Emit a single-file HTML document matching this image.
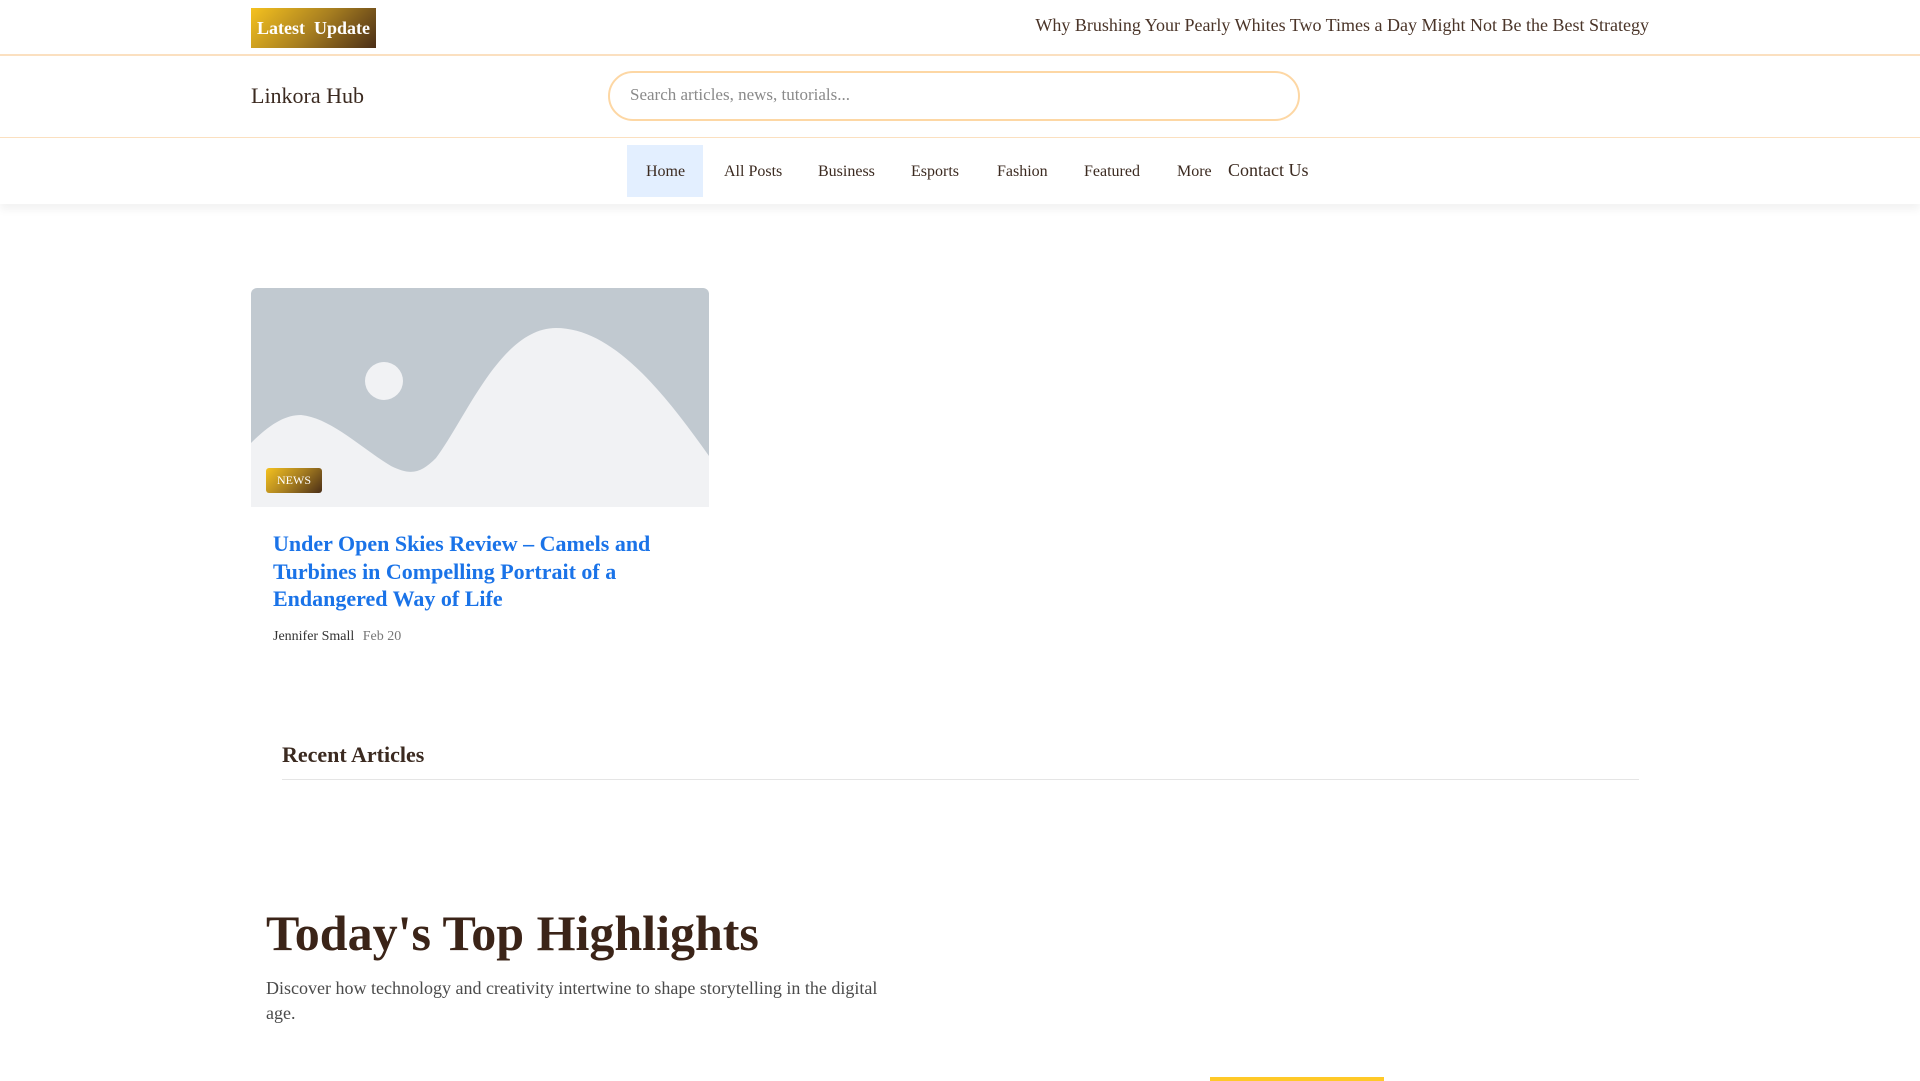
<!DOCTYPE html>
<html><head><meta charset="utf-8"><style>
*{margin:0;padding:0;box-sizing:border-box}
body{width:1920px;height:1080px;overflow:hidden;background:#fff;font-family:"Liberation Serif",serif;color:#3b2a20;position:relative}
.a{position:absolute;white-space:nowrap}
.grad{background:linear-gradient(135deg,#f5c21f 0%,#a87f20 50%,#4a2e17 100%)}
</style></head><body>
<div class="a grad" style="left:251px;top:8px;width:125px;height:40px;color:#fff;font-size:18px;line-height:40px;text-align:center;font-weight:bold">Latest&nbsp; Update</div>
<div class="a" style="right:271px;top:15px;font-size:18px;color:#4a3428;letter-spacing:0px">Why Brushing Your Pearly Whites Two Times a Day Might Not Be the Best Strategy</div>
<div class="a" style="left:0;top:54px;width:1920px;height:2px;background:#fbe0c0"></div>
<div class="a" style="left:251px;top:83px;font-size:22px;color:#3b2a20">Linkora Hub</div>
<div class="a" style="left:608px;top:71px;width:692px;height:50px;border:2px solid #fdd7a4;border-radius:25px"></div>
<div class="a" style="left:630px;top:85px;font-size:17px;color:#8a8a8a">Search articles, news, tutorials...</div>
<div class="a" style="left:0;top:137px;width:1920px;height:1px;background:#fbe0c0"></div>
<div class="a" style="left:0;top:138px;width:1920px;height:66px;box-shadow:0 6px 8px rgba(0,0,0,0.05)"></div>
<div class="a" style="left:627px;top:145px;width:76px;height:52px;background:#e3efff"></div>
<div class="a" style="top:163px;left:0;font-size:16px;color:#3b2a20;width:1920px;height:20px">
<span class="a" style="left:646px">Home</span>
<span class="a" style="left:724px">All Posts</span>
<span class="a" style="left:818px">Business</span>
<span class="a" style="left:911px">Esports</span>
<span class="a" style="left:997px">Fashion</span>
<span class="a" style="left:1084px">Featured</span>
<span class="a" style="left:1177px">More</span>
<span class="a" style="left:1228px;top:-3px;font-size:18px">Contact Us</span>
</div>
<div class="a" style="left:251px;top:288px;width:458px;height:219px;border-radius:6px 6px 0 0;overflow:hidden">
<svg width="458" height="219" viewBox="0 0 458 219"><rect width="458" height="219" fill="#c1c9d0"/><circle cx="133" cy="93" r="19" fill="#f1f2f4"/><path d="M0,155 C20,135 35,127 50,127 C80,130 110,160 140,178 C160,188 170,185 185,170 C215,130 250,40 305,40 C360,40 410,100 458,168 L458,219 L0,219Z" fill="#f1f2f4"/></svg>
<div class="a grad" style="left:15px;top:180px;width:56px;height:25px;border-radius:3px;color:#fff;font-size:12px;line-height:25px;text-align:center">NEWS</div>
</div>
<div class="a" style="left:273px;top:530px;font-size:22px;line-height:27.5px;font-weight:bold;color:#1a73e8">Under Open Skies Review – Camels and<br>Turbines in Compelling Portrait of a<br>Endangered Way of Life</div>
<div class="a" style="left:273px;top:629px;font-size:14px;color:#333">Jennifer Small <span style="color:#777;margin-left:5px">Feb 20</span></div>
<div class="a" style="left:282px;top:742px;font-size:22px;font-weight:bold;color:#3b2a20">Recent Articles</div>
<div class="a" style="left:282px;top:779px;width:1357px;height:1px;background:#e5e5e5"></div>
<div class="a" style="left:266px;top:904px;font-size:50px;font-weight:bold;color:#3b2418">Today's Top Highlights</div>
<div class="a" style="left:266px;top:976px;font-size:18px;line-height:25px;color:#4a4a4a;white-space:normal;width:620px">Discover how technology and creativity intertwine to shape storytelling in the digital age.</div>
<div class="a" style="left:1210px;top:1077px;width:174px;height:4px;background:#ffc928"></div>
</body></html>
